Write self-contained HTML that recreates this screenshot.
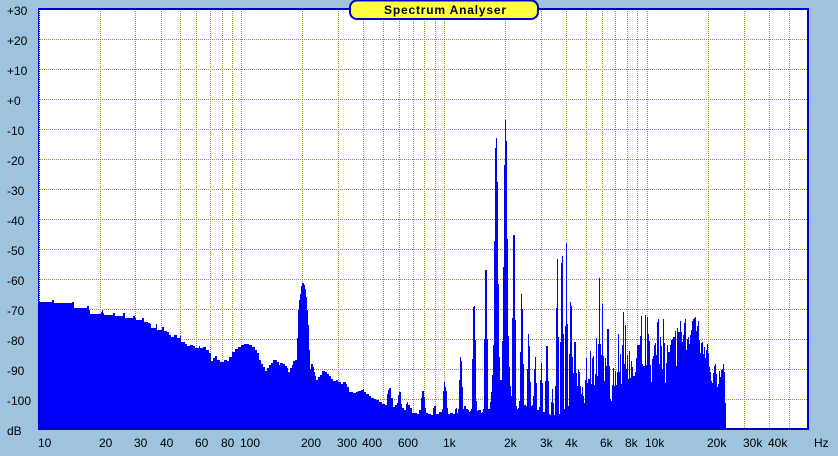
<!DOCTYPE html>
<html><head><meta charset="utf-8"><style>
html,body{margin:0;padding:0;width:838px;height:456px;overflow:hidden;background:#9DC4DC}
svg{position:absolute;left:0;top:0}
text{font-family:"Liberation Sans",Arial,sans-serif;font-size:12px;fill:#000}
.t{font-weight:bold;font-size:12px;letter-spacing:.82px}
</style></head><body>
<svg width="838" height="456" viewBox="0 0 838 456" xmlns="http://www.w3.org/2000/svg">
<defs>
<pattern id="h" patternUnits="userSpaceOnUse" width="2" height="2"><rect x="0" y="1" width="1" height="1" fill="#999900" shape-rendering="crispEdges"/></pattern>
<pattern id="v" patternUnits="userSpaceOnUse" width="1" height="2"><rect x="0" y="1" width="1" height="1" fill="#999900" shape-rendering="crispEdges"/></pattern>
<pattern id="b" patternUnits="userSpaceOnUse" width="1" height="2"><rect x="0" y="1" width="1" height="1" fill="#0000CC" shape-rendering="crispEdges"/></pattern>
</defs>
<rect x="38" y="8" width="771" height="422" fill="#fff"/>
<g shape-rendering="crispEdges">
<path fill="url(#h)" d="M40 39h767v1h-767zM40 69h767v1h-767zM40 99h767v1h-767zM40 129h767v1h-767zM40 159h767v1h-767zM40 189h767v1h-767zM40 219h767v1h-767zM40 249h767v1h-767zM40 279h767v1h-767zM40 309h767v1h-767zM40 339h767v1h-767zM40 369h767v1h-767zM40 399h767v1h-767z"/>
<path fill="url(#v)" d="M100 10h1v418h-1zM135 10h1v418h-1zM161 10h1v418h-1zM180 10h1v418h-1zM196 10h1v418h-1zM210 10h1v418h-1zM222 10h1v418h-1zM232 10h1v418h-1zM241 10h1v418h-1zM302 10h1v418h-1zM338 10h1v418h-1zM363 10h1v418h-1zM383 10h1v418h-1zM399 10h1v418h-1zM413 10h1v418h-1zM424 10h1v418h-1zM435 10h1v418h-1zM444 10h1v418h-1zM505 10h1v418h-1zM541 10h1v418h-1zM566 10h1v418h-1zM586 10h1v418h-1zM602 10h1v418h-1zM615 10h1v418h-1zM627 10h1v418h-1zM637 10h1v418h-1zM647 10h1v418h-1zM708 10h1v418h-1zM744 10h1v418h-1zM769 10h1v418h-1zM789 10h1v418h-1z"/>
</g>
<path shape-rendering="crispEdges" fill="#0000FF" d="M38 430V302H52V300H54V303H72V302H74V308H87V306H89V310H90V314H101V312H102V310H103V313H104V315H113V313H115V316H123V313H125V318H133V316H135V318H136V320H142V318H144V322H148V323H150V324H151V328H156V324H157V330H162V327H164V331H167V332H169V335H171V337H174V335H177V338H180V336H181V342H185V344H187V346H190V345H193V346H195V348H199V346H200V348H203V347H206V350H209V353H211V361H213V358H215V356H217V360H220V362H224V360H227V361H229V357H232V352H235V349H238V347H241V345H244V344H249V345H252V347H255V350H257V353H259V360H261V364H263V367H265V371H267V368H269V365H271V363H273V360H277V362H279V365H280V363H283V364H285V366H287V368H288V372H290V368H292V365H293V361H295V360H297V338H298V310H299V300H300V294H301V286H302V283H304V285H305V289H306V297H307V310H308V325H309V350H310V369H311V364H313V367H314V372H315V376H316V380H318V377H320V375H322V371H325V372H327V374H329V376H331V379H333V381H336V380H338V382H341V384H343V382H346V384H347V387H349V392H353V393H356V392H358V391H361V390H363V389H364V392H366V394H369V396H371V398H374V399H376V400H379V402H382V404H385V405H387V394H388V390H389V388H391V398H393V407H395V405H397V403H398V395H399V392H401V404H402V408H404V410H406V404H407V402H408V405H410V408H412V413H417V414H419V410H421V398H422V391H424V397H425V408H426V413H428V414H431V415H433V408H434V406H436V414H439V412H442V409H443V391H444V382H445V387H446V391H447V408H448V414H450V413H453V414H455V409H456V408H457V413H458V409H459V380H460V357H461V361H462V387H463V409H464V406H466V409H468V410H469V412H470V411H471V409H472V359H473V307H474V306H475V340H476V401H477V411H478V410H481V413H482V412H483V409H484V339H485V270H487V339H488V409H490V402H491V392H492V375H493V345H494V241H495V148H496V138H497V182H498V284H499V357H500V380H502V341H503V267H504V165H505V120H506V141H507V239H508V336H509V367H510V386H511V396H512V318H513V235H515V320H516V406H517V409H518V408H519V401H520V352H521V294H522V309H523V364H524V405H526V406H527V369H528V334H529V346H530V382H531V406H532V405H533V396H534V369H535V357H536V383H537V410H539V407H540V380H541V363H542V383H543V412H545V381H546V346H548V381H549V414H550V415H551V402H552V389H553V403H554V415H555V386H556V308H557V259H558V337H559V414H560V342H561V263H562V256H563V334H564V409H565V326H566V243H567V324H568V406H569V354H570V302H571V306H572V357H573V373H574V342H576V373H577V386H578V370H579V372H580V386H581V394H582V387H583V396H584V403H585V380H586V358H587V383H588V379H590V351H591V384H592V358H593V356H594V385H595V374H596V338H597V376H598V344H599V278H600V344H601V355H602V304H603V356H604V381H605V358H606V366H607V329H609V366H610V399H611V401H612V385H613V368H614V386H615V371H616V385H617V372H618V334H619V372H620V354H621V384H622V345H623V312H624V364H625V325H626V369H627V355H628V379H629V351H630V378H631V361H632V367H633V376H635V372H636V358H637V345H640V336H641V316H642V364H643V366H645V315H646V365H647V317H648V334H649V341H650V365H651V382H652V359H653V356H654V345H655V343H656V355H657V322H658V319H659V364H660V337H661V346H662V369H663V319H664V343H665V383H666V363H667V345H668V352H670V345H671V340H672V339H673V337H675V331H676V366H677V328H678V332H680V321H681V332H682V342H683V335H684V323H685V319H686V350H687V339H688V337H689V344H690V335H691V330H692V321H693V319H694V318H695V317H696V331H697V326H698V321H699V340H700V353H701V343H702V342H703V354H704V347H705V358H706V350H707V344H708V353H709V367H710V372H711V381H712V383H713V373H714V366H715V364H716V374H717V387H718V384H719V371H720V377H721V370H722V369H723V364H724V372H725V403H726V430Z"/>
<g shape-rendering="crispEdges">
<rect x="38" y="8" width="771" height="2" fill="#0000CC"/>
<rect x="38" y="428" width="771" height="2" fill="#0000CC"/>
<rect x="807" y="8" width="2" height="422" fill="#0000CC"/>
<rect x="38" y="8" width="1" height="422" fill="#0000CC"/>
<rect x="39" y="10" width="1" height="418" fill="url(#b)"/>
</g>
<rect x="350" y="0.5" width="188" height="18.5" rx="7" ry="7" fill="#FFFF40" stroke="#0000CC" stroke-width="2"/>
<text class="t" x="384" y="14">Spectrum Analyser</text>
<g>
<text x="7" y="15">+30</text><text x="7" y="45">+20</text><text x="7" y="75">+10</text><text x="7" y="105">+0</text>
<text x="7" y="135">-10</text><text x="7" y="165">-20</text><text x="7" y="195">-30</text><text x="7" y="225">-40</text>
<text x="7" y="255">-50</text><text x="7" y="285">-60</text><text x="7" y="315">-70</text><text x="7" y="345">-80</text>
<text x="7" y="375">-90</text><text x="7" y="405">-100</text><text x="7" y="435">dB</text>
<text x="38" y="447">10</text><text x="99" y="447">20</text><text x="134" y="447">30</text><text x="160" y="447">40</text>
<text x="195" y="447">60</text><text x="221" y="447">80</text><text x="240" y="447">100</text><text x="301" y="447">200</text>
<text x="337" y="447">300</text><text x="362" y="447">400</text><text x="398" y="447">600</text><text x="443" y="447">1k</text>
<text x="504" y="447">2k</text><text x="540" y="447">3k</text><text x="565" y="447">4k</text><text x="600" y="447">6k</text>
<text x="625" y="447">8k</text><text x="645" y="447">10k</text><text x="707" y="447">20k</text><text x="743" y="447">30k</text>
<text x="768" y="447">40k</text><text x="814" y="447">Hz</text>
</g>
</svg>
</body></html>
